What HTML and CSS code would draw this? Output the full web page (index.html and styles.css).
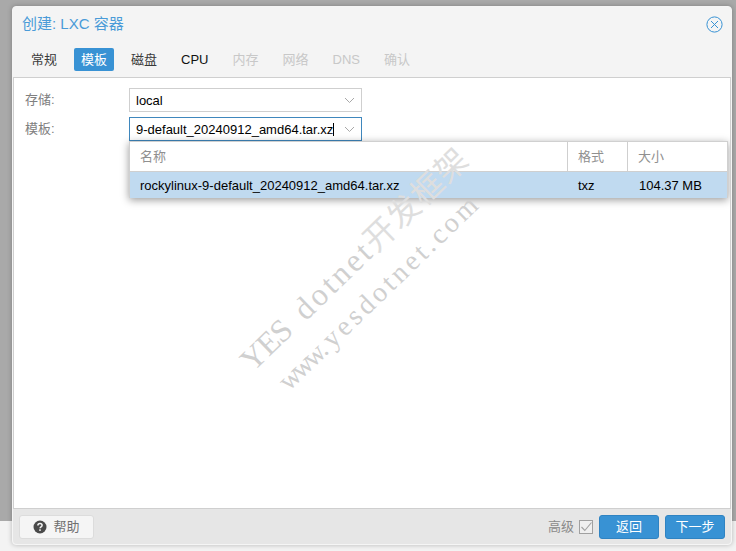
FILE: index.html
```html
<!DOCTYPE html>
<html lang="zh">
<head>
<meta charset="utf-8">
<title>创建: LXC 容器</title>
<link rel="stylesheet" href="styles.css">
</head>
<body>
<div class="mask-strip"></div>
<section class="window">
  <header class="win-head">
    <h1 class="win-title">创建: LXC 容器</h1>
    <svg class="win-close" width="17" height="17" viewBox="0 0 17 17" aria-hidden="true"><circle cx="8.5" cy="8.5" r="7.6" fill="none" stroke="#3892d4" stroke-width="1"/><path d="M5 5l7 7M12 5l-7 7" fill="none" stroke="#3892d4" stroke-width="1"/></svg>
  </header>
  <nav class="tabs">
    <span class="tab">常规</span>
    <span class="tab active">模板</span>
    <span class="tab">磁盘</span>
    <span class="tab latin">CPU</span>
    <span class="tab off">内存</span>
    <span class="tab off">网络</span>
    <span class="tab off latin">DNS</span>
    <span class="tab off">确认</span>
  </nav>
  <main class="panel">
    <div class="field">
      <label class="field-label">存储:</label>
      <div class="combo"><span class="combo-text">local</span><svg class="chev" width="11" height="7" viewBox="0 0 11 7" aria-hidden="true"><path d="M1 1l4.5 4.5L10 1" fill="none" stroke="#a8a8a8" stroke-width="1"/></svg></div>
    </div>
    <div class="field">
      <label class="field-label">模板:</label>
      <div class="combo focus"><span class="combo-text">9-default_20240912_amd64.tar.xz</span><span class="caret"></span><svg class="chev" width="11" height="7" viewBox="0 0 11 7" aria-hidden="true"><path d="M1 1l4.5 4.5L10 1" fill="none" stroke="#a8a8a8" stroke-width="1"/></svg></div>
    </div>
    <div class="picker">
      <div class="row head">
        <span class="cell c-name">名称</span>
        <span class="cell c-fmt">格式</span>
        <span class="cell c-size">大小</span>
      </div>
      <div class="row selected">
        <span class="cell c-name">rockylinux-9-default_20240912_amd64.tar.xz</span>
        <span class="cell c-fmt">txz</span>
        <span class="cell c-size">104.37 MB</span>
      </div>
    </div>
    <div class="mark mark-a"><span class="mark-caps">YES</span> dotnet<span class="mark-cjk">开发框架</span></div>
    <div class="mark mark-b"><span class="mark-tight">www</span>.yesdotnet.com</div>
  </main>
  <footer class="win-foot">
    <button class="btn help"><svg width="14" height="14" viewBox="0 0 14 14" aria-hidden="true"><circle cx="7" cy="7" r="6.5" fill="#4a4a4a"/><path d="M4.9 5.4c0-1.3 1-1.9 2.1-1.9s2.1.7 2.1 1.8c0 1.700-2 1.500-2 3" fill="none" stroke="#f5f5f5" stroke-width="1.500"/><rect x="6.200" y="9.300" width="1.600" height="1.600" fill="#f5f5f5"/></svg><span class="help-text">帮助</span></button>
    <div class="spacer"></div>
    <span class="adv">高级</span>
    <svg class="check" width="14" height="14" viewBox="0 0 14 14" aria-hidden="true"><rect x=".5" y=".5" width="13" height="13" fill="#efefef" stroke="#a0a0a0"/><path d="M2.500 7l3.300 3.500L12.500 2.500" fill="none" stroke="#a0a0a0" stroke-width="1.100"/></svg>
    <button class="btn primary back">返回</button>
    <button class="btn primary next">下一步</button>
  </footer>
</section>
</body>
</html>
```
FILE: styles.css
```css
* { box-sizing: border-box; }
html, body { margin: 0; height: 100%; }
body {
  position: relative;
  width: 736px;
  height: 551px;
  overflow: hidden;
  background: #a9a9a9;
  padding: 6px 4px 6px 12px;
  font-family: "Liberation Sans", "Noto Sans CJK SC", sans-serif;
  font-size: 13px;
  color: #000;
}
.mask-strip {
  position: absolute;
  left: 0;
  right: 0;
  top: 521px;
  bottom: 0;
  background: #f3f3f3;
}
.window {
  position: relative;
  display: flex;
  flex-direction: column;
  height: 539px;
  background: #f4f4f4;
  border: 1px solid #f5f5f5;
  border-radius: 4px;
  box-shadow: 0 0 5px rgba(0,0,0,.25);
}
.win-head {
  display: flex;
  align-items: center;
  justify-content: space-between;
  height: 34px;
  padding: 0 2px 0 9px;
  flex: none;
}
.win-title {
  margin: 0;
  padding-bottom: 4px;
  font-size: 15px;
  font-weight: 400;
  color: #4a9bd8;
}
.win-close { margin-right: 6px; }
.tabs {
  display: flex;
  height: 36px;
  padding: 7px 0 0 11px;
  flex: none;
}
.tab {
  display: flex;
  align-items: center;
  justify-content: center;
  height: 23px;
  padding: 0 7px 2px;
  margin-right: 10px;
  border-radius: 2px;
  font-size: 13px;
  color: #3a3a3a;
  white-space: nowrap;
}
.tab.latin { color: #111; padding-bottom: 1px; }
.tab.active { background: #3892d4; color: #fff; }
.tab.off { color: #c8c8c8; }
.panel {
  position: relative;
  flex: 1;
  padding: 10px 0 0 11px;
  background: #fff;
  border: 1px solid #cfcfcf;
  overflow: hidden;
}
.field {
  display: flex;
  align-items: center;
  height: 24px;
  margin-bottom: 5px;
}
.field-label { width: 104px; padding-bottom: 3px; color: #808080; font-size: 13px; }
.combo {
  display: flex;
  align-items: center;
  width: 233px;
  height: 24px;
  padding: 0 6px 0 6px;
  border: 1px solid #cfcfcf;
  background: #fff;
}
.combo.focus { border-color: #3f87bd; }
.combo-text { font-size: 13px; white-space: nowrap; }
.caret { width: 1px; height: 13px; background: #000; }
.chev { margin-left: auto; }
.picker {
  position: absolute;
  left: 115px;
  top: 63px;
  width: 599px;
  background: #fff;
  border: 1px solid #d0d0d0;
  border-bottom: 0;
  box-shadow: 0 2px 8px rgba(0,0,0,.4);
  z-index: 2;
}
.row { display: flex; }
.row.head { height: 30px; border-bottom: 1px solid #cfcfcf; color: #909090; }
.row.selected { height: 26px; background: #c0daf0; color: #000; }
.cell { display: flex; align-items: center; padding-left: 10px; white-space: nowrap; }
.head .cell { padding-bottom: 3px; }
.c-name { width: 437px; }
.c-fmt { width: 60px; }
.c-size { flex: 1; }
.head .c-fmt, .head .c-size { border-left: 1px solid #cfcfcf; padding-left: 10px; }
.selected .c-fmt { padding-left: 11px; }
.selected .c-size { padding-left: 12px; }
.mark {
  position: absolute;
  font-family: "Liberation Serif", serif;
  color: #d0d0d0;
  white-space: nowrap;
  transform: rotate(-44deg);
  transform-origin: left bottom;
  z-index: 3;
  pointer-events: none;
}
.mark-a { left: 243px; top: 262px; font-size: 32px; line-height: 34px; letter-spacing: 3px; word-spacing: 5px; }
.mark-caps { letter-spacing: -1px; }
.mark-cjk { font-family: "Noto Sans CJK SC", sans-serif; font-size: 32px; line-height: 34px; letter-spacing: 1px; color: #dedede; }
.mark-b { left: 279px; top: 288px; font-size: 28px; line-height: 30px; letter-spacing: 3.5px; }
.mark-tight { letter-spacing: -3.5px; }
.win-foot {
  display: flex;
  align-items: center;
  height: 35px;
  padding: 0 6px;
  background: #e6e6e6;
  flex: none;
  border-radius: 0 0 4px 4px;
}
.spacer { flex: 1; }
.btn {
  display: flex;
  align-items: center;
  justify-content: center;
  height: 24px;
  padding: 0 0 2px;
  font: inherit;
  border-radius: 3px;
  cursor: default;
}
.help {
  width: 75px;
  gap: 6px;
  padding: 0;
  background: #f5f5f5;
  border: 1px solid #dcdcdc;
  color: #707070;
}
.help-text { padding-bottom: 2px; }
.adv { color: #8a8a8a; margin-right: 5px; padding-bottom: 2px; }
.check { margin-right: 6px; }
.primary { width: 60px; background: #3892d4; border: 1px solid #2f83c2; color: #fff; }
.next { margin-left: 6px; }
```
